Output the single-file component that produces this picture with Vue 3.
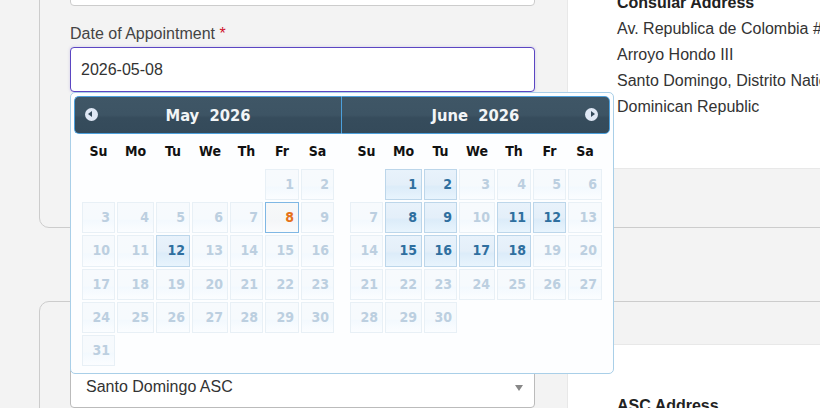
<template>
  <div class="page">
    <section class="card first">
      <div class="form-col">
        <div class="prev-input"></div>
        <div class="field">
          <label>Date of Appointment <span class="req">*</span></label>
          <div class="date-input">2026-05-08</div>
          <div class="datepicker">
            <div v-for="m in months" :key="m.name" class="month" :class="m.side">
              <div class="month-head">
                <span v-if="m.side === 'left'" class="nav prev"></span>
                <span class="title">{{ m.name }}&nbsp; 2026</span>
                <span v-if="m.side === 'right'" class="nav next"></span>
              </div>
              <div class="days" :style="{ gridTemplateColumns: m.cols }">
                <div class="dow" v-for="d in dow" :key="d">{{ d }}</div>
              </div>
              <div class="days dates" :style="{ gridTemplateColumns: m.cols }">
                <span v-for="n in m.offset" :key="'b' + n"></span>
                <div
                  v-for="n in m.count"
                  :key="n"
                  class="day"
                  :class="{ open: m.open.includes(n), today: m.today === n }"
                >{{ n }}</div>
              </div>
            </div>
          </div>
        </div>
      </div>
      <div class="side-col">
        <div class="info top">
          <strong>Consular Address</strong>
          <p>Av. Republica de Colombia #57</p>
          <p>Arroyo Hondo III</p>
          <p>Santo Domingo, Distrito National</p>
          <p>Dominican Republic</p>
        </div>
      </div>
    </section>

    <section class="card second">
      <div class="form-col">
        <div class="select">
          <span>Santo Domingo ASC</span>
          <i class="caret"></i>
        </div>
      </div>
      <div class="side-col">
        <div class="info bottom">
          <strong>ASC Address</strong>
        </div>
      </div>
    </section>
  </div>
</template>

<script setup>
const dow = ["Su", "Mo", "Tu", "We", "Th", "Fr", "Sa"];

const months = [
  {
    name: "May",
    side: "left",
    cols: "33px 37px 34px 36px 33px 34px 33px",
    offset: 5,
    count: 31,
    open: [12],
    today: 8
  },
  {
    name: "June",
    side: "right",
    cols: "33px 37px 33px 36px 34px 33px 34px",
    offset: 1,
    count: 30,
    open: [1, 2, 8, 9, 11, 12, 15, 16, 17, 18],
    today: 0
  }
];
</script>

<style>
html,
body {
  margin: 0;
  background: #f3f3f3;
}
</style>

<style scoped>
.page {
  height: 408px;
  overflow: hidden;
  background: #f3f3f3;
  color: #333;
  font-family: "Liberation Sans", Arial, sans-serif;
  font-size: 16px;
}

.card {
  display: flex;
  margin-right: -20px;
  margin-left: 39px;
  border: 1px solid #ccc;
  border-radius: 10px;
  box-sizing: border-box;
}

.first {
  height: 328px;
  margin-top: -100px;
}

.second {
  height: 200px;
  margin-top: 73px;
}

.form-col {
  width: 527px;
  flex-shrink: 0;
  padding: 0 32px 0 30px;
  box-sizing: border-box;
}

.side-col {
  flex: 1;
  min-width: 0;
}

.prev-input {
  height: 44px;
  margin-top: 61px;
  border: 1px solid #ccc;
  border-radius: 4px;
  background: #fff;
  box-sizing: border-box;
}

.field {
  position: relative;
  margin-top: 17px;
}

label {
  display: block;
  height: 24px;
  line-height: 21px;
  color: #444;
}

.req {
  color: #d0112b;
}

.date-input {
  height: 45px;
  padding-left: 10px;
  border: 1px solid #5b46c2;
  border-radius: 4px;
  background: #fff;
  line-height: 43px;
  box-sizing: border-box;
  box-shadow: 0 0 3px rgba(91, 70, 194, 0.25);
}

.datepicker {
  position: absolute;
  top: 69px;
  left: 0;
  z-index: 2;
  display: flex;
  width: 544px;
  height: 282px;
  padding: 3px;
  border: 1px solid #a9cfe8;
  border-radius: 5px;
  background: #fdfeff;
  box-sizing: border-box;
  font-family: "DejaVu Sans Condensed", "DejaVu Sans", sans-serif;
}

.month-head {
  position: relative;
  display: flex;
  align-items: center;
  justify-content: center;
  height: 38px;
  border: 1px solid #4ca0dc;
  background: linear-gradient(#3f5666 0%, #3d5464 50%, #364c5c 58%, #344a5a 100%);
  box-sizing: border-box;
}

.left {
  width: 267px;
}

.right {
  flex: 1;
}

.left .month-head {
  border-right: 0;
  border-radius: 5px 0 0 5px;
}

.right .month-head {
  border-radius: 0 5px 5px 0;
}

.title {
  color: #f2f5f7;
  font-size: 16.4px;
  font-weight: bold;
  white-space: pre;
}

.nav {
  position: absolute;
  top: 11px;
  width: 13px;
  height: 13px;
  border-radius: 50%;
  background: #dfe8f5;
}

.nav::after {
  position: absolute;
  top: 3px;
  border-top: 3.5px solid transparent;
  border-bottom: 3.5px solid transparent;
  content: "";
}

.prev {
  left: 10px;
}

.prev::after {
  left: 3px;
  border-right: 4px solid #33495a;
}

.next {
  right: 11px;
}

.next::after {
  left: 6px;
  border-left: 4px solid #33495a;
}

.days {
  display: grid;
  column-gap: 2px;
  padding-left: 8px;
}

.right .days {
  padding-left: 9px;
}

.dow {
  height: 27px;
  padding-top: 8px;
  color: #111;
  font-size: 14px;
  font-weight: bold;
  line-height: 18px;
  text-align: center;
  box-sizing: border-box;
}

.dates {
  grid-template-rows: 31px 31px 32px 31px 31px 31px;
  row-gap: 2px;
  margin-top: 8px;
}

.day {
  padding-right: 4px;
  border: 1px solid #e8f0f6;
  background: linear-gradient(#f7fafd 0%, #f6fafd 55%, #f3f9fe 60%, #fbfdff 100%);
  color: #bccfe0;
  font-size: 14px;
  font-weight: bold;
  line-height: 29px;
  text-align: right;
  box-sizing: border-box;
}

.open {
  border-color: #bcd6ea;
  background: linear-gradient(#e8f2fb 0%, #e4eff9 50%, #dcecf9 58%, #e8f4fd 100%);
  color: #2f6f9f;
}

.today {
  border-color: #7fb7e4;
  background: linear-gradient(#f7f8f9 0%, #f4f6f8 60%, #fafbfc 100%);
  color: #e6721a;
}

.info {
  padding-left: 49px;
  border-left: 1px solid #e8e8e8;
  background: #fff;
  box-sizing: border-box;
  white-space: nowrap;
}

.info strong {
  display: block;
  color: #222;
  line-height: 26px;
}

.info p {
  margin: 0;
  line-height: 26px;
}

.top {
  height: 268px;
  padding-top: 89px;
  border-bottom: 1px solid #e8e8e8;
}

.bottom {
  height: 157px;
  margin-top: 42px;
  padding-top: 48px;
  border-top: 1px solid #e8e8e8;
}

.select {
  position: relative;
  height: 44px;
  margin-top: 62px;
  padding-left: 15px;
  border: 1px solid #bbb;
  border-radius: 4px;
  background: #fff;
  line-height: 44px;
  box-sizing: border-box;
}

.caret {
  position: absolute;
  top: 20px;
  right: 11px;
  border-top: 6px solid #888;
  border-right: 4px solid transparent;
  border-left: 4px solid transparent;
}
</style>
